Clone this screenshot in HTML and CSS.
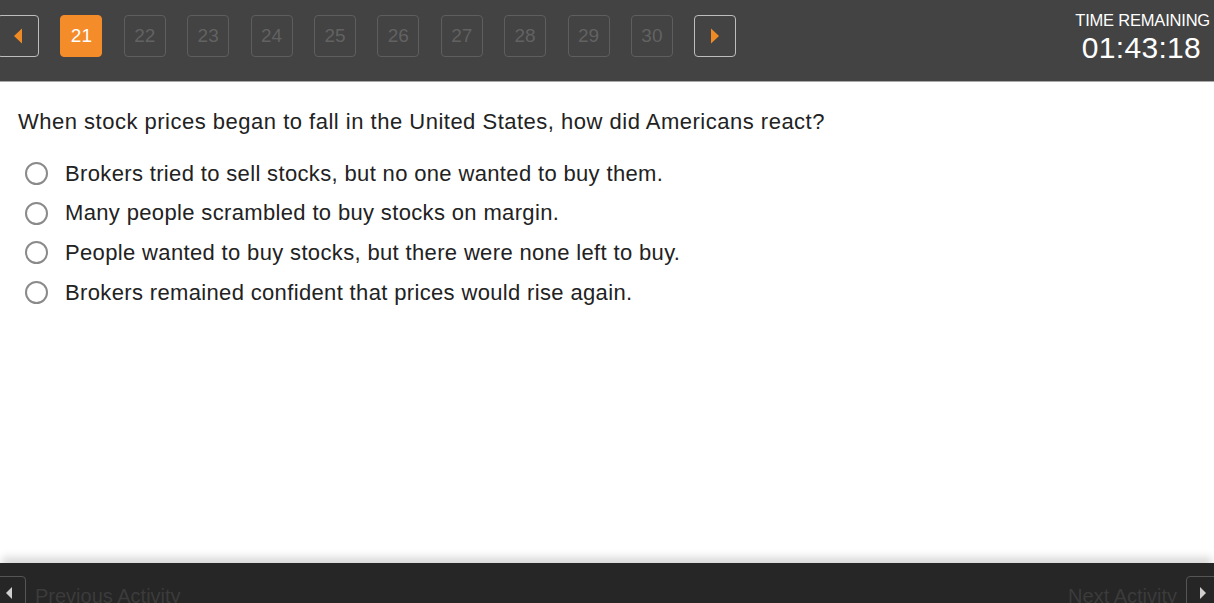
FILE: index.html
```html
<!DOCTYPE html>
<html>
<head>
	<meta charset="utf-8" />
	<title>Activity</title>
	<link rel="stylesheet" href="styles.css">
</head>
<body>

<div class="topbar">
	<div class="pager">
		<button class="nav prev"><svg width="10" height="16" viewBox="0 0 10 16"><path d="M9 0.5 L1 8 L9 15.5 Z" fill="#f08a24"/></svg></button>
		<button class="page current">21</button>
		<button class="page">22</button>
		<button class="page">23</button>
		<button class="page">24</button>
		<button class="page">25</button>
		<button class="page">26</button>
		<button class="page">27</button>
		<button class="page">28</button>
		<button class="page">29</button>
		<button class="page">30</button>
		<button class="nav next"><svg width="10" height="16" viewBox="0 0 10 16"><path d="M1 0.5 L9 8 L1 15.5 Z" fill="#f08a24"/></svg></button>
	</div>
	<div class="timer">
		<div class="timer-label">TIME REMAINING</div>
		<div class="timer-value">01:43:18</div>
	</div>
</div>

<div class="content">
	<div class="question">When stock prices began to fall in the United States, how did Americans react?</div>
	<ul class="answers">
		<li><span class="radio"></span>Brokers tried to sell stocks, but no one wanted to buy them.</li>
		<li><span class="radio"></span>Many people scrambled to buy stocks on margin.</li>
		<li><span class="radio"></span>People wanted to buy stocks, but there were none left to buy.</li>
		<li><span class="radio"></span>Brokers remained confident that prices would rise again.</li>
	</ul>
</div>

<div class="footer">
	<div class="footer-side">
		<button class="fbtn fprev"><svg width="8" height="12" viewBox="0 0 8 12"><path d="M7 0 L1 6 L7 12 Z" fill="#cfcfcf"/></svg></button>
		<span class="flabel">Previous Activity</span>
	</div>
	<div class="footer-side">
		<span class="flabel">Next Activity</span>
		<button class="fbtn fnext"><svg width="8" height="12" viewBox="0 0 8 12"><path d="M1 0 L7 6 L1 12 Z" fill="#cfcfcf"/></svg></button>
	</div>
</div>

</body>
</html>
```

FILE: styles.css
```css
html, body {
	margin: 0;
	padding: 0;
	height: 100%;
	overflow: hidden;
	background: #fff;
	font-family: "Liberation Sans", Arial, sans-serif;
}

body {
	display: flex;
	flex-direction: column;
}

/* top bar with page buttons and timer */
.topbar {
	height: 81px;
	background: #434343;
	border-bottom: 1px solid #a8a8a8;
	display: flex;
	justify-content: space-between;
	flex-shrink: 0;
}

.pager {
	display: flex;
	gap: 21.4px;
	align-items: flex-start;
	padding-top: 15px;
	margin-left: -3px;
}

.pager button {
	width: 42px;
	height: 42px;
	box-sizing: border-box;
	border-radius: 4px;
	background: transparent;
	font-family: "Liberation Sans", Arial, sans-serif;
	font-size: 19px;
	padding: 0;
	display: flex;
	align-items: center;
	justify-content: center;
}

.pager .page {
	border: 1px solid #5e5e5e;
	color: #626262;
}

.pager .page.current {
	background: #f48c2a;
	border-color: #f48c2a;
	color: #fff;
}

.pager .nav {
	border: 1px solid #bdbdbd;
}

.timer {
	color: #fff;
	text-align: right;
	padding: 11px 4px 0 0;
}
.timer-label {
	font-size: 16.5px;
	letter-spacing: -0.2px;
}
.timer-value {
	font-size: 30px;
	margin-top: 1px;
	padding-right: 9px;
	letter-spacing: 0.3px;
}

/* question */
.content {
	flex: 1;
	padding: 27px 18px 0 18px;
}

.question {
	font-size: 22px;
	color: #222;
	letter-spacing: 0.5px;
}

.answers {
	list-style: none;
	margin: 19px 0 0 0;
	padding: 0;
}
.answers li {
	display: flex;
	align-items: center;
	height: 39.6px;
	font-size: 22px;
	color: #222;
	letter-spacing: 0.35px;
}
.radio {
	width: 19px;
	height: 19px;
	border: 2px solid #8a8a8a;
	border-radius: 50%;
	margin: 0 17px 0 7px;
	flex-shrink: 0;
}

/* bottom bar */
.footer {
	height: 40px;
	background: #262626;
	display: flex;
	justify-content: space-between;
	align-items: flex-start;
	flex-shrink: 0;
	box-shadow: 0 -8px 8px -2px rgba(0, 0, 0, 0.15);
}
.footer-side {
	display: flex;
	align-items: flex-start;
	padding-top: 13px;
}
.fbtn {
	width: 34px;
	height: 34px;
	box-sizing: border-box;
	background: #262626;
	border: 1px solid #555;
	border-radius: 4px;
	padding: 0;
	display: flex;
	align-items: center;
	justify-content: center;
}
.fprev {
	margin-left: -8px;
}
.fnext {
	margin-right: -6px;
}
.flabel {
	font-size: 20px;
	color: #3b3b3b;
	margin: 9px 9px 0 9px;
}
```
